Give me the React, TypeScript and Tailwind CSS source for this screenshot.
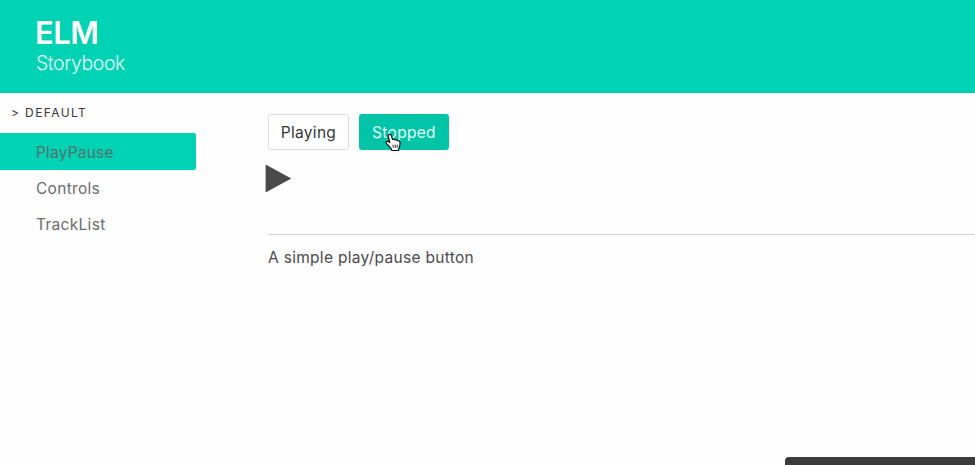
const stories = ['PlayPause', 'Controls', 'TrackList'];

function HandCursor() {
  return (
    <svg className="absolute left-[26px] top-[19px] h-[19px] w-4" viewBox="0 0 16 18" aria-hidden="true">
      <path
        d="M4.3 1C5.4.8 6.2 1.4 6.5 2.4L7.6 6C8.4 5.4 9.5 5.7 10 6.5C10.9 6 12 6.3 12.4 7.1C13.8 6.8 14.9 7.8 15 9C15.2 11.6 14.8 13 13.9 14.4L13.6 17H6.6L6.1 15C4.7 13.6 3.6 12 2.4 10.9C1.3 10 .8 9.2 1.2 8.4C1.8 7.4 3.4 7.8 4.5 8.8L4.8 9L3.3 3C3 2 3.4 1.2 4.3 1Z"
        fill="#fff"
        stroke="#111"
        strokeWidth="1.2"
        strokeLinejoin="round"
      />
      <path d="M8 11.2L8.4 14.2M10.2 11.2V14.2M12.3 11.2L12 14.2" stroke="#111" strokeWidth=".9" />
    </svg>
  );
}

export default function App() {
  return (
    <div className="flex h-[465px] w-[975px] flex-col overflow-hidden bg-[#fefefe] font-['Inter',sans-serif] text-[15.5px] tracking-[0.3px] text-[#4a4a4a]">
      <header className="h-[93px] shrink-0 bg-[#00d3b4] pl-9 pt-[17px]">
        <h1 className="-ml-px text-[31px] font-semibold leading-8 tracking-[-0.5px] text-white">ELM</h1>
        <h2 className="text-[19.5px] font-light leading-7 tracking-[-0.45px] text-[#e6fff9]">Storybook</h2>
      </header>
      <div className="flex min-h-0 flex-1">
        <nav className="w-[196px] shrink-0">
          <p className="h-10 pl-[11px] text-[12px] leading-10 tracking-[1.4px] text-[#363636]">&gt; DEFAULT</p>
          <ul>
            {stories.map((story) => (
              <li
                key={story}
                className={
                  story === 'PlayPause'
                    ? 'h-[37px] rounded-r-[2px] bg-[#00d3b4] pl-9 leading-[39px] tracking-[0.2px] text-[#58716c]'
                    : 'h-9 pl-9 leading-[38px] text-[#6b6b6b]'
                }
              >
                {story}
              </li>
            ))}
          </ul>
        </nav>
        <main className="flex flex-1 flex-col pl-[72px] pt-[21px]">
          <div className="flex gap-2.5">
            <button className="h-9 w-[81px] rounded-[3px] border border-[#dbdbdb] bg-white pt-0.5 tracking-[0.3px] text-[#363636]">Playing</button>
            <button className="relative h-9 w-[90px] rounded-[3px] bg-[#00c4a7] pt-0.5 tracking-[0.3px] text-[#e5fff9]">
              Stopped
              <HandCursor />
            </button>
          </div>
          <svg className="-ml-[3px] mt-3.5 h-7 w-7" viewBox="0 0 28 28" aria-label="Play">
            <path d="M.6 .5V28.5L26.3 14.5Z" fill="#4a4a4a" />
          </svg>
          <hr className="mt-[42px] border-t border-[#d3d3cd]" />
          <p className="mt-[11px] leading-6">A simple play/pause button</p>
          <div className="mt-auto h-2 w-[190px] self-end rounded-tl-[4px] bg-[#3c3c3c]" />
        </main>
      </div>
    </div>
  );
}
